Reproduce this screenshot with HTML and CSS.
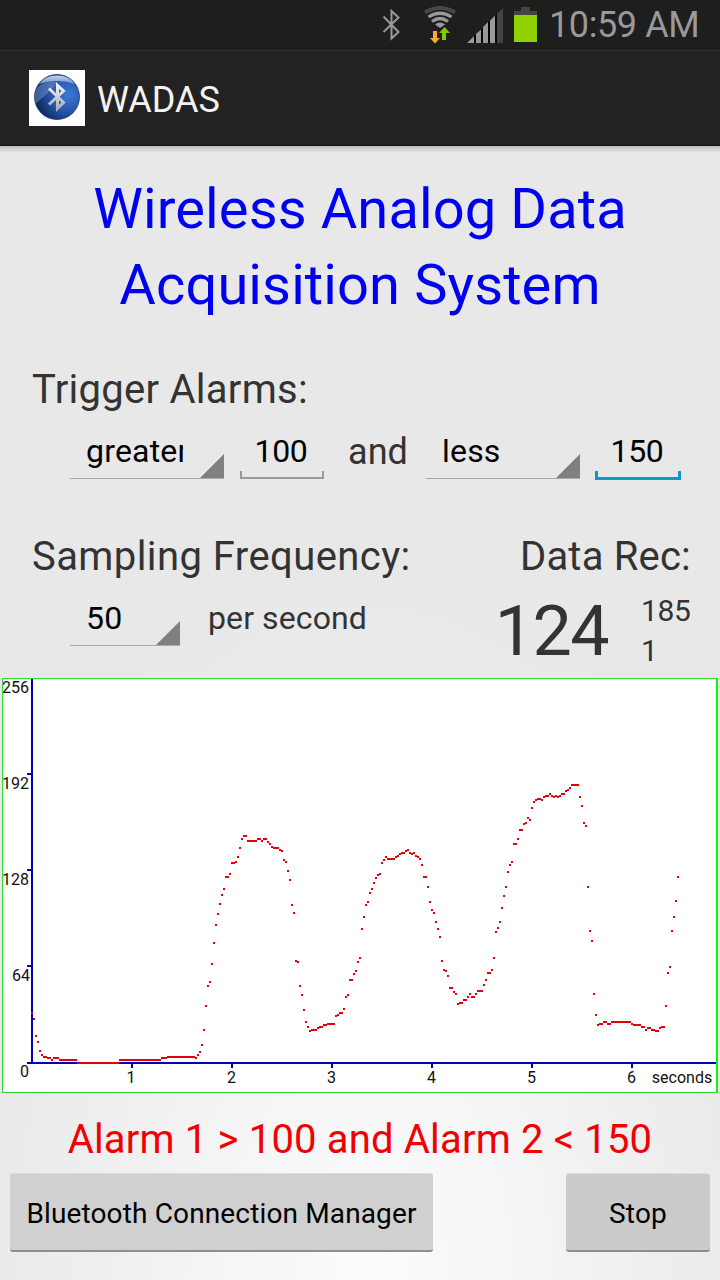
FILE: index.html
```
<!DOCTYPE html>
<html lang="en">
<head>
    <meta charset="UTF-8">
    <meta name="viewport" content="width=device-width, initial-scale=1.0">
    <title>WADAS</title>
    <link rel="stylesheet" href="styles.css">
</head>
<body>
    <div class="status-bar">
        <svg class="status-icons" width="134" height="50" viewBox="0 0 134 50">
            <path d="M3.500 16.500L18.500 32L11.500 38.500V11L18.500 17.500L3.500 32" fill="none" stroke="#999" stroke-width="2"/>
            <g fill="none">
                <path d="M45 12.500Q60 3.500 75 12.500" stroke="#484848" stroke-width="4"/>
                <path d="M48.500 17Q60 9.500 71.500 17" stroke="#999" stroke-width="3.200"/>
                <path d="M52 21.500Q60 15.500 68 21.500" stroke="#999" stroke-width="3.200"/>
            </g>
            <path d="M55 24.500Q60 20.500 65 24.500L60 28Z" fill="#999"/>
            <path d="M53 31H57V38H60L55 43.500L50 38H53Z" fill="#ffa830"/>
            <path d="M62 40V33H59L64.500 27L70 33H66V40Z" fill="#80c800"/>
            <path d="M87 43L123 8V43Z" fill="#050505"/>
            <path d="M87 43L94 36V43ZM96 43V34L101 29.500V43ZM103 43V27L108 22V43ZM110 43V20.500L115 15.500V43Z" fill="#999"/>
            <path d="M117 43V13.500L123 8V43Z" fill="#444"/>
        </svg>
        <svg class="battery" width="24" height="50" viewBox="0 0 24 50">
            <path d="M0 15V11H7V7H16V11H23V15Z" fill="#444"/>
            <rect x="0" y="15" width="23" height="27" fill="#91d100"/>
        </svg>
        <span class="clock">10:59 AM</span>
    </div>

    <div class="action-bar">
        <svg class="app-icon" width="56" height="56" viewBox="0 0 56 56">
            <defs>
                <radialGradient id="ball" cx="0.75" cy="0.45" r="0.75">
                    <stop offset="0" stop-color="#3c78d8"/>
                    <stop offset="0.5" stop-color="#2856ac"/>
                    <stop offset="1" stop-color="#0c2458"/>
                </radialGradient>
                <linearGradient id="shine" x1="0" y1="0" x2="0" y2="1">
                    <stop offset="0" stop-color="#c8d4ec"/>
                    <stop offset="1" stop-color="#6890d0"/>
                </linearGradient>
                <linearGradient id="rune" x1="0" y1="0" x2="0" y2="1">
                    <stop offset="0" stop-color="#f2f2f2"/>
                    <stop offset="1" stop-color="#a8b0bc"/>
                </linearGradient>
            </defs>
            <rect width="56" height="56" fill="#fff"/>
            <circle cx="28" cy="27" r="22.500" fill="url(#ball)" stroke="#1c3468" stroke-width="0.800"/>
            <path d="M10 14Q16 5.500 28 5.500T46 14Q28 8 10 14Z" fill="url(#shine)"/>
            <path d="M6 34Q4 20 11 15Q20 10 28 12Q26 18 6 34Z" fill="#7ea2dc" opacity="0.450"/>
            <path d="M20 18.500L34.500 32.500L28.500 38.500V15.500L34.500 21L20 34.500" fill="none" stroke="url(#rune)" stroke-width="3"/>
        </svg>
        <span class="app-name">WADAS</span>
    </div>

    <div class="content">
        <h1 class="title">Wireless Analog Data<br>Acquisition System</h1>

        <h2 class="section-label">Trigger Alarms:</h2>
        <div class="alarm-row">
            <div class="spinner spinner-wide"><span>greater</span></div>
            <div class="field">100</div>
            <span class="and">and</span>
            <div class="spinner spinner-wide"><span>less</span></div>
            <div class="field field-active">150</div>
        </div>

        <div class="sampling">
            <div>
                <h2 class="label freq-label">Sampling Frequency:</h2>
                <div class="freq-row">
                    <div class="spinner"><span>50</span></div>
                    <span class="unit">per second</span>
                </div>
            </div>
            <div class="received">
                <h2 class="label data-label">Data Rec:</h2>
                <div class="readings">
                    <span class="current">124</span>
                    <div class="range">
                        <span>185</span>
                        <span>1</span>
                    </div>
                </div>
            </div>
        </div>

        <div class="graph">
            <svg width="713" height="413" viewBox="3 679 713 413" shape-rendering="crispEdges">
                <g fill="#0000b8">
                    <rect x="31" y="679" width="2" height="385"/>
                    <rect x="27" y="773" width="5" height="2"/>
                    <rect x="27" y="869" width="5" height="2"/>
                    <rect x="27" y="965" width="5" height="2"/>
                    <rect x="27" y="1062" width="689" height="2"/>
                    <rect x="131" y="1064" width="2" height="4"/>
                    <rect x="231" y="1064" width="2" height="4"/>
                    <rect x="331" y="1064" width="2" height="4"/>
                    <rect x="431" y="1064" width="2" height="4"/>
                    <rect x="531" y="1064" width="2" height="4"/>
                    <rect x="631" y="1064" width="2" height="4"/>
                </g>
                <g class="axis-text" text-anchor="end">
                    <text x="29" y="693">256</text>
                    <text x="29" y="789">192</text>
                    <text x="29" y="885">128</text>
                    <text x="30" y="981">64</text>
                    <text x="29" y="1077">0</text>
                </g>
                <g class="axis-text" text-anchor="middle">
                    <text x="131" y="1083">1</text>
                    <text x="231.500" y="1083">2</text>
                    <text x="331.500" y="1083">3</text>
                    <text x="431.500" y="1083">4</text>
                    <text x="531.500" y="1083">5</text>
                    <text x="631.500" y="1083">6</text>
                    <text x="682" y="1083">seconds</text>
                </g>
                <path id="trace" fill="#e00010"/>
            </svg>
        </div>

        <p class="alarm-status">Alarm 1 &gt; 100 and Alarm 2 &lt; 150</p>
        <div class="buttons">
            <button class="btn btn-manager">Bluetooth Connection Manager</button>
            <button class="btn btn-stop">Stop</button>
        </div>
    </div>
    <script src="script.js"></script>
</body>
</html>
```

FILE: styles.css
```
* {
    box-sizing: border-box;
}
body {
    margin: 0;
    width: 720px;
    height: 1280px;
    overflow: hidden;
    font-family: Roboto, sans-serif;
    color: #333;
    background-color: #e8e8e8;
}
h1, h2, p {
    margin: 0;
    font-weight: normal;
}
.status-bar {
    display: flex;
    height: 50px;
    padding-left: 380px;
    background-color: #1e1e1e;
}
.status-icons {
    width: 134px;
}
.battery {
    width: 24px;
    margin-right: 11px;
}
.clock {
    font-size: 36px;
    line-height: 51px;
    letter-spacing: -0.4px;
    color: #999;
    white-space: nowrap;
}
.action-bar {
    display: flex;
    align-items: center;
    height: 96px;
    padding-left: 29px;
    background-color: #222;
    border-top: 1px solid #303030;
    border-bottom: 1px solid #111;
}
.app-icon {
    margin-right: 12px;
}
.app-name {
    padding-top: 4px;
    font-size: 36px;
    color: #f3f3f3;
}
.content {
    height: 1134px;
    padding-top: 25px;
    background: linear-gradient(#bbb 0, rgba(200, 200, 200, 0) 7px),
        radial-gradient(ellipse 420px 720px at 370px 1134px, #fcfcfc, #f4f4f4 40%, #e8e8e8);
}
.title {
    font-size: 56px;
    line-height: 76px;
    letter-spacing: 0.12px;
    text-align: center;
    color: #0000f0;
}
.section-label {
    margin-top: 43px;
    padding-left: 32px;
    font-size: 40px;
    line-height: 48px;
    letter-spacing: 0.27px;
}
.alarm-row {
    display: flex;
    height: 67px;
    margin-top: 12px;
    padding-left: 70px;
}
.spinner {
    position: relative;
    width: 110px;
    height: 53px;
    padding-left: 16px;
    border-bottom: 1px solid #aaa;
    font-size: 32px;
    line-height: 50px;
    letter-spacing: 0.2px;
    color: #000;
}
.spinner-wide {
    width: 154px;
}
.spinner span {
    display: block;
    max-width: 97px;
    overflow: hidden;
    white-space: nowrap;
}
.spinner::after {
    content: "";
    position: absolute;
    right: 0;
    bottom: 0;
    border-left: 24px solid transparent;
    border-bottom: 24px solid #808080;
}
.field {
    width: 84px;
    height: 53px;
    margin-left: 16px;
    padding-right: 2px;
    text-align: center;
    font-size: 32px;
    line-height: 50px;
    letter-spacing: -0.4px;
    color: #000;
    background: linear-gradient(#999, #999) left bottom / 2px 8px no-repeat,
        linear-gradient(#999, #999) right bottom / 2px 8px no-repeat,
        linear-gradient(#999, #999) left bottom / 100% 2px no-repeat;
}
.field-active {
    width: 86px;
    height: 54px;
    margin-left: 15px;
    background: linear-gradient(#0a99c8, #0a99c8) left bottom / 3px 9px no-repeat,
        linear-gradient(#0a99c8, #0a99c8) right bottom / 3px 9px no-repeat,
        linear-gradient(#0a99c8, #0a99c8) left bottom / 100% 3px no-repeat;
}
.and {
    width: 102px;
    text-align: center;
    padding-left: 6px;
    font-size: 36px;
    line-height: 52px;
}
.sampling {
    display: flex;
    justify-content: space-between;
    height: 145px;
    margin-top: 40px;
    padding: 0 29px 0 32px;
}
.label {
    font-size: 40px;
    line-height: 48px;
    letter-spacing: 0.2px;
}
.freq-label {
    letter-spacing: 0.42px;
}
.freq-row {
    display: flex;
    margin-top: 12px;
    padding-left: 38px;
}
.unit {
    margin-left: 28px;
    font-size: 32px;
    line-height: 50px;
    letter-spacing: 0.1px;
}
.data-label {
    text-align: right;
}
.readings {
    display: flex;
    justify-content: flex-end;
}
.current {
    font-size: 70px;
    line-height: 100px;
    letter-spacing: -1.6px;
}
.range {
    width: 50px;
    margin-left: 33px;
    padding-top: 10px;
    font-size: 30px;
    line-height: 40px;
    letter-spacing: -0.3px;
}
.range span {
    display: block;
}
.graph {
    width: 716px;
    height: 415px;
    margin-left: 2px;
    background-color: #fff;
    border: 1px solid #2fdc2f;
    border-right: 2px solid #14f014;
}
.graph svg {
    display: block;
}
.axis-text {
    font-size: 16px;
    fill: #111;
}
.alarm-status {
    margin-top: 23px;
    font-size: 40px;
    line-height: 48px;
    letter-spacing: 0.17px;
    text-align: center;
    color: #f00000;
    white-space: nowrap;
}
.buttons {
    display: flex;
    justify-content: space-between;
    margin-top: 9px;
    padding: 0 10px;
}
.btn {
    height: 79px;
    padding: 3px 0 0;
    border: 0;
    border-top: 1px solid #dcdcdc;
    border-bottom: 2px solid #8e8e8e;
    border-radius: 3px;
    font-family: Roboto, sans-serif;
    font-size: 28px;
    letter-spacing: 0.14px;
    color: #000;
    background-color: #d0d0d0;
}
.btn-manager {
    width: 423px;
}
.btn-stop {
    width: 144px;
    background-color: #cbcbcb;
}
```

FILE: script.js
```
// 50 samples per second, 2px per sample
const samples = [
    33, 29, 18, 14, 8, 5, 4, 4, 3, 3, 2, 3, 3, 3,
    ...Array(9).fill(2), ...Array(21).fill(0), ...Array(21).fill(2), 3, 3, 3, ...Array(14).fill(4),
    3, 5, 7, 12, 22, 38, 51, 54, 66, 80, 92, 99, 106, 112, 116,
    124, 124, 126, 133, 133, 134, 137, 143, 149, 151, 151, 148, 148, 148, 148, 148, 149, 149, 148, 149,
    149, 147, 146, 144, 143, 143, 143, 142, 141, 135, 134, 128, 122, 105, 100, 68, 67, 51, 45, 35,
    27, 24, 21, 22, 22, 22, 23, 24, 24, 25, 25, 26, 26, 26, 26, 31, 32, 33, 33, 36,
    44, 45, 55, 55, 59, 61, 67, 70, 89, 97, 105, 107, 113, 116, 120, 123, 125, 126, 133, 135,
    137, 136, 136, 136, 136, 137, 138, 139, 140, 140, 141, 142, 140, 139, 140, 138, 137, 136, 132, 124,
    124, 117, 107, 102, 100, 94, 89, 84, 68, 62, 61, 58, 50, 50, 47, 46, 39, 40, 40, 42,
    42, 44, 46, 44, 44, 46, 48, 48, 48, 52, 55, 60, 60, 62, 70, 87, 90, 94, 103, 111,
    117, 127, 132, 134, 146, 146, 149, 155, 155, 159, 160, 163, 162, 170, 174, 175, 176, 176, 175, 177,
    178, 178, 179, 178, 177, 178, 177, 178, 179, 179, 181, 182, 183, 185, 185, 185, 185, 177, 171, 160,
    158, 117, 88, 81, 46, 32, 25, 26, 26, 27, 27, 26, 26, ...Array(10).fill(27), 26, 25, 25, 25, 25,
    24, 24, 22, 23, 23, 22, 22, 21, 21, 23, 24, 24, 38, 60, 64, 88, 97, 108, 124
];

const d = samples.map((v, i) => `M${33 + 2 * (i - 1)} ${Math.floor(1062 - 1.5 * v)}h2v2h-2z`).join('');
document.getElementById('trace').setAttribute('d', d);
```
